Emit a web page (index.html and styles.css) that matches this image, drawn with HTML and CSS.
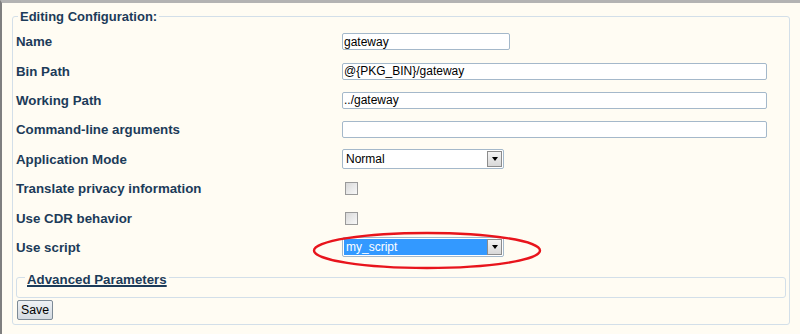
FILE: index.html
```html
<!DOCTYPE html>
<html lang="en">
<head>
    <meta charset="UTF-8">
    <title>Editing Configuration</title>
    <link rel="stylesheet" href="styles.css">
</head>
<body>
    <div class="page">
        <fieldset class="config">
            <legend>Editing Configuration:</legend>

            <div class="rows">
                <div class="label">Name</div>
                <div class="value"><input class="text short" type="text" value="gateway"></div>

                <div class="label">Bin Path</div>
                <div class="value"><input class="text" type="text" value="@{PKG_BIN}/gateway"></div>

                <div class="label">Working Path</div>
                <div class="value"><input class="text" type="text" value="../gateway"></div>

                <div class="label">Command-line arguments</div>
                <div class="value"><input class="text" type="text" value=""></div>

                <div class="label">Application Mode</div>
                <div class="value">
                    <div class="select">
                        <span class="select-text">Normal</span>
                        <span class="select-arrow"></span>
                    </div>
                </div>

                <div class="label">Translate privacy information</div>
                <div class="value"><span class="check"></span></div>

                <div class="label">Use CDR behavior</div>
                <div class="value"><span class="check"></span></div>

                <div class="label">Use script</div>
                <div class="value marked">
                    <div class="select">
                        <span class="select-text selected">my_script</span>
                        <span class="select-arrow"></span>
                    </div>
                    <!-- red ring drawn over the field -->
                    <svg class="ring" width="232" height="40" viewBox="0 0 232 40">
                        <ellipse cx="116" cy="19.5" rx="113" ry="17.5" fill="none" stroke="#e8141c" stroke-width="2.4"/>
                    </svg>
                </div>
            </div>

            <fieldset class="advanced">
                <legend><a href="#">Advanced Parameters</a></legend>
            </fieldset>

            <button class="save" type="button">Save</button>
        </fieldset>
    </div>
</body>
</html>
```

FILE: styles.css
```css
html, body {
    margin: 0;
    padding: 0;
    height: 100%;
}

body {
    background-color: #fffcf3;
    font-family: "Liberation Sans", Arial, sans-serif;
    border-top: 3px solid #b3b3b3;
    border-left: 2px solid #7f7f7f;
    box-sizing: border-box;
}

.page {
    padding: 6px 10px 0 10px;
    width: 778px;
}

fieldset {
    margin: 0;
    border: 1px solid #d3dfe9;
    border-radius: 3px;
}

.config {
    padding: 1px 3px 4px 3px;
    width: 776px;
    box-sizing: border-box;
    height: 316px;
}

legend {
    padding: 0 2px;
    margin-left: 2px;
    font-size: 13px;
    font-weight: bold;
    color: #1c3b59;
}

.rows {
    margin-top: 2px;
    display: grid;
    grid-template-columns: 326px 1fr;
    grid-auto-rows: 29.4px;
    align-items: center;
}

.label {
    font-size: 13.3px;
    font-weight: bold;
    color: #1c3b59;
}

.value {
    display: flex;
    align-items: center;
}

.text {
    width: 425px;
    height: 17px;
    box-sizing: border-box;
    border: 1px solid #a4b8ca;
    border-radius: 2px;
    background: #fff;
    padding: 0 1px;
    font-family: "Liberation Sans", Arial, sans-serif;
    font-size: 12px;
    color: #000;
    margin: 0;
}

.text.short {
    width: 168px;
}

.select {
    display: flex;
    align-items: center;
    width: 162px;
    height: 20px;
    box-sizing: border-box;
    border: 1px solid #a4b8ca;
    border-radius: 2px;
    background: #fff;
    padding: 1px;
}

.select-text {
    flex: 1;
    height: 100%;
    padding-left: 2px;
    font-size: 12px;
    line-height: 16px;
    color: #000;
}

.select-text.selected {
    background-color: #3399ff;
    color: #fff;
}

.select-arrow {
    width: 15px;
    height: 16px;
    box-sizing: border-box;
    border: 1px solid #8c8c8c;
    background: linear-gradient(#f4f4f4, #d8d8d8);
    display: flex;
    align-items: center;
    justify-content: center;
}

.select-arrow::after {
    content: "";
    border-left: 3.5px solid transparent;
    border-right: 3.5px solid transparent;
    border-top: 4px solid #000;
}

.check {
    display: block;
    width: 11px;
    height: 11px;
    margin-left: 3px;
    border: 1px solid #9a9a9a;
    background: linear-gradient(135deg, #d9d9d9, #f8f8f8);
}

.marked {
    position: relative;
}

.ring {
    position: absolute;
    left: -31px;
    top: -6px;
}

.advanced {
    margin: 5px 0 0 0;
    padding: 0;
    height: 31px;
    box-sizing: border-box;
    width: 770px;
}

.advanced legend {
    margin-left: 8px;
    padding: 6px 2px 0 2px;
    font-size: 13.3px;
    line-height: 14px;
}

.advanced legend a {
    color: #1c3b59;
    text-decoration: underline;
    text-decoration-thickness: 2px;
}

.save {
    display: block;
    margin: 2px 0 0 1px;
    height: 20px;
    padding: 0 3px;
    font-family: "Liberation Sans", Arial, sans-serif;
    font-size: 12.3px;
    color: #000;
    border: 1px solid #7d8a96;
    border-radius: 2px;
    background: linear-gradient(#eef1f4, #d3dae1);
}
```
